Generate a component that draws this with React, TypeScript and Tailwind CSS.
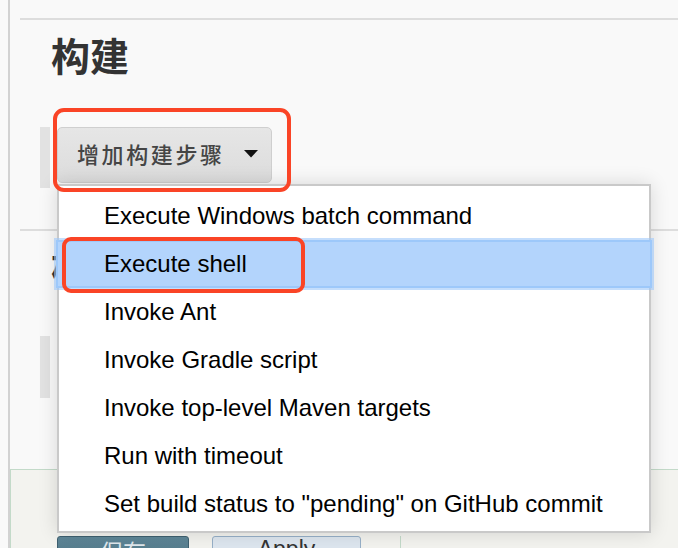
import React from "react";

const items = [
  "Execute Windows batch command",
  "Execute shell",
  "Invoke Ant",
  "Invoke Gradle script",
  "Invoke top-level Maven targets",
  "Run with timeout",
  'Set build status to "pending" on GitHub commit',
];

export default function App() {
  return (
    <div className="relative w-[678px] h-[548px] overflow-hidden bg-[#f9f9f9] font-['Liberation_Sans','Noto_Sans_CJK_SC',sans-serif]">
      <div className="ml-[8px] h-full border-l-2 border-[#d2d2d2] flex flex-col">
        <div className="pl-[10px] pt-[18px] flex flex-col">
          <div className="h-[2px] bg-[#dddddd]" />
          <h1 className="mt-[14px] pl-[31px] h-[40px] leading-[40px] text-[39px] font-bold text-[#333333] font-['Noto_Sans_CJK_SC',sans-serif]">
            构建
          </h1>
          <div className="mt-[53px] pl-[20px] flex items-start gap-[7px]">
            <div className="w-[10px] h-[61px] bg-[#e2e2e2]" />
            <div className="w-[215px] h-[56px] rounded-[5px] border border-[#cfcfcf] bg-gradient-to-b from-[#e6e6e6] to-[#dcdcdc] flex items-center pl-[19px] gap-[19px]">
              <span className="text-[22px] tracking-[2.6px] text-[#454545] font-medium font-['Noto_Sans_CJK_SC',sans-serif] leading-none -mt-[4px]">
                增加构建步骤
              </span>
              <svg width="14" height="8" viewBox="0 0 14 8" className="-mt-[2px]">
                <polygon points="0,0 14,0 7,7.5" fill="#111" />
              </svg>
            </div>
          </div>
          <div className="mt-[41px] h-[2px] bg-[#dddddd]" />
          <h1 className="mt-[14px] pl-[31px] h-[40px] leading-[40px] text-[39px] font-bold text-[#333333] font-['Noto_Sans_CJK_SC',sans-serif]">
            构建后操作
          </h1>
          <div className="mt-[51px] pl-[20px] flex items-start gap-[7px]">
            <div className="w-[10px] h-[62px] bg-[#e2e2e2]" />
            <div className="w-[260px] h-[56px] rounded-[5px] border border-[#cfcfcf] bg-gradient-to-b from-[#e6e6e6] to-[#dcdcdc]" />
          </div>
        </div>
        <div className="mt-[71px] flex-1 border-t border-l border-[#c3dac9] bg-[#f3f3ef] pt-[66px] pl-[46px] flex items-start">
          <div className="w-[132px] h-[40px] rounded-[3px] bg-gradient-to-b from-[#5f8798] to-[#466b7b] border border-[#3e6070] text-[#dfe7ec] text-[23px] font-['Noto_Sans_CJK_SC',sans-serif] leading-none pt-[3px] text-center">
            保存
          </div>
          <div className="ml-[23px] w-[149px] h-[40px] rounded-[3px] bg-[#dde6ef] border border-[#97b0c8] text-[#333] text-[23px] leading-none pt-[1px] text-center">
            Apply
          </div>
          <div className="ml-[39px] w-[1px] h-[40px] bg-[#c3dac9]" />
        </div>
      </div>

      {/* dropdown menu */}
      <div className="absolute left-[57px] top-[184px] w-[594px] h-[349px] bg-white border-2 border-[#c9c9c9] shadow-[0_0_18px_rgba(0,0,0,0.14)] pt-[6px]">
        {items.map((t, i) => (
          <div
            key={t}
            className={
              i === 1
                ? "h-[48px] flex items-center -mx-[3px] pl-[48px] bg-[#b3d4fc] shadow-[inset_0_0_0_2px_#9dc8fa,0_0_0_2px_rgba(158,200,250,0.6)] text-[24px] text-black"
                : "h-[48px] flex items-center pl-[45px] text-[24px] text-black"
            }
          >
            {t}
          </div>
        ))}
      </div>

      {/* annotation boxes */}
      <div className="absolute left-[53px] top-[108px] w-[238px] h-[84px] border-[4px] border-[#fa4426] rounded-[11px]" />
      <div className="absolute left-[62px] top-[237px] w-[243px] h-[56px] border-[4px] border-[#fa4426] rounded-[9px]" />
    </div>
  );
}
